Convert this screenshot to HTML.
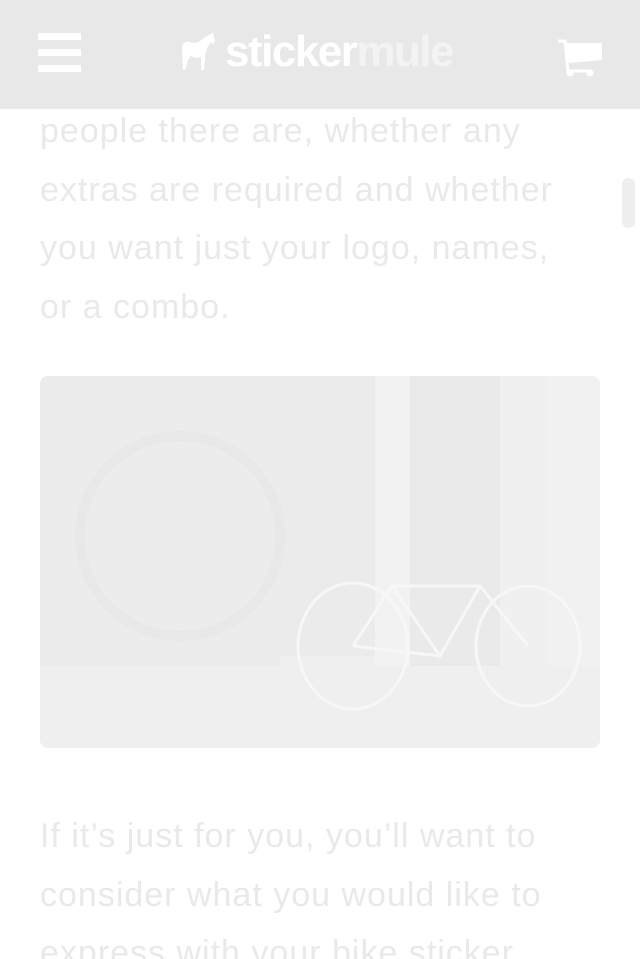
<!DOCTYPE html>
<html><head><meta charset="utf-8"><style>
html,body{margin:0;padding:0;background:#fff;width:640px;height:959px;overflow:hidden;position:relative;font-family:"Liberation Sans",sans-serif}
.hdr{position:absolute;left:0;top:0;width:640px;height:109px;background:#e8e8e8}
.bar{position:absolute;left:38px;width:43px;height:7px;background:#fff}
p{position:absolute;left:40px;margin:0;font-size:34px;letter-spacing:1px;line-height:58.5px;color:#e9e9e9;width:590px}
.img{position:absolute;left:40px;top:376px;width:560px;height:372px;border-radius:8px;background:#efefef;overflow:hidden}
.sb{position:absolute;left:622px;top:178px;width:13px;height:50px;border-radius:7px;background:#eeeeee}
</style></head><body>
<p style="top:102px">people there are, whether any<br>extras are required and whether<br>you want just your logo, names,<br>or a combo.</p>
<div class="sb"></div>
<div class="img">
<svg width="560" height="372" viewBox="0 0 560 372">
<rect x="0" y="0" width="240" height="290" fill="#ececec"/>
<rect x="240" y="0" width="95" height="280" fill="#ebebeb"/>
<rect x="335" y="0" width="35" height="300" fill="#f2f2f2"/>
<rect x="370" y="0" width="90" height="290" fill="#eaeaea"/>
<rect x="460" y="0" width="48" height="300" fill="#f0f0f0"/>
<rect x="508" y="0" width="52" height="300" fill="#f1f1f1"/>
<rect x="0" y="290" width="560" height="82" fill="#efefef"/>
<circle cx="140" cy="160" r="100" fill="none" stroke="#e8e8e8" stroke-width="10"/>
<g fill="none" stroke="#f7f7f7" stroke-width="3">
<ellipse cx="313" cy="270" rx="55" ry="63"/>
<ellipse cx="488" cy="270" rx="52" ry="60"/>
<path d="M313 270 L352 210 L440 210 L488 270 M352 210 L400 280 L440 210 M400 280 L313 270"/>
</g>
</svg>
</div>
<p style="top:807px">If it’s just for you, you’ll want to<br>consider what you would like to<br>express with your bike sticker.</p>
<div class="hdr">
<div class="bar" style="top:33px"></div><div class="bar" style="top:49px"></div><div class="bar" style="top:65px"></div>
<svg style="position:absolute;left:180px;top:32px" width="44" height="40" viewBox="0 0 44 40"><path d="M2 14 Q4 9 10 10 Q16 12 20 9 Q26 4 31 2 L33 0 L35 9 L33 12 L31 10 Q26 16 25 26 L24 38 L21 38 L21 25 Q16 27 11 24 Q7 28 6 36 L5 38 L3 38 Z" fill="#fff"/></svg>
<div style="position:absolute;left:225px;top:26px;font-size:44px;font-weight:bold;letter-spacing:-1.5px;line-height:52px;color:#fff">sticker<span style="color:#f3f3f3">mule</span></div>
<svg style="position:absolute;left:557px;top:38px" width="46" height="40" viewBox="0 0 46 40"><path d="M1 3 H8 L11 33 H34" fill="none" stroke="#fff" stroke-width="3"/><path d="M9 5 H45 V22 L12 25 Z" fill="#fff"/><circle cx="13" cy="35" r="3.5" fill="#fff"/><circle cx="33" cy="35" r="3.5" fill="#fff"/></svg>
</div>
</body></html>
